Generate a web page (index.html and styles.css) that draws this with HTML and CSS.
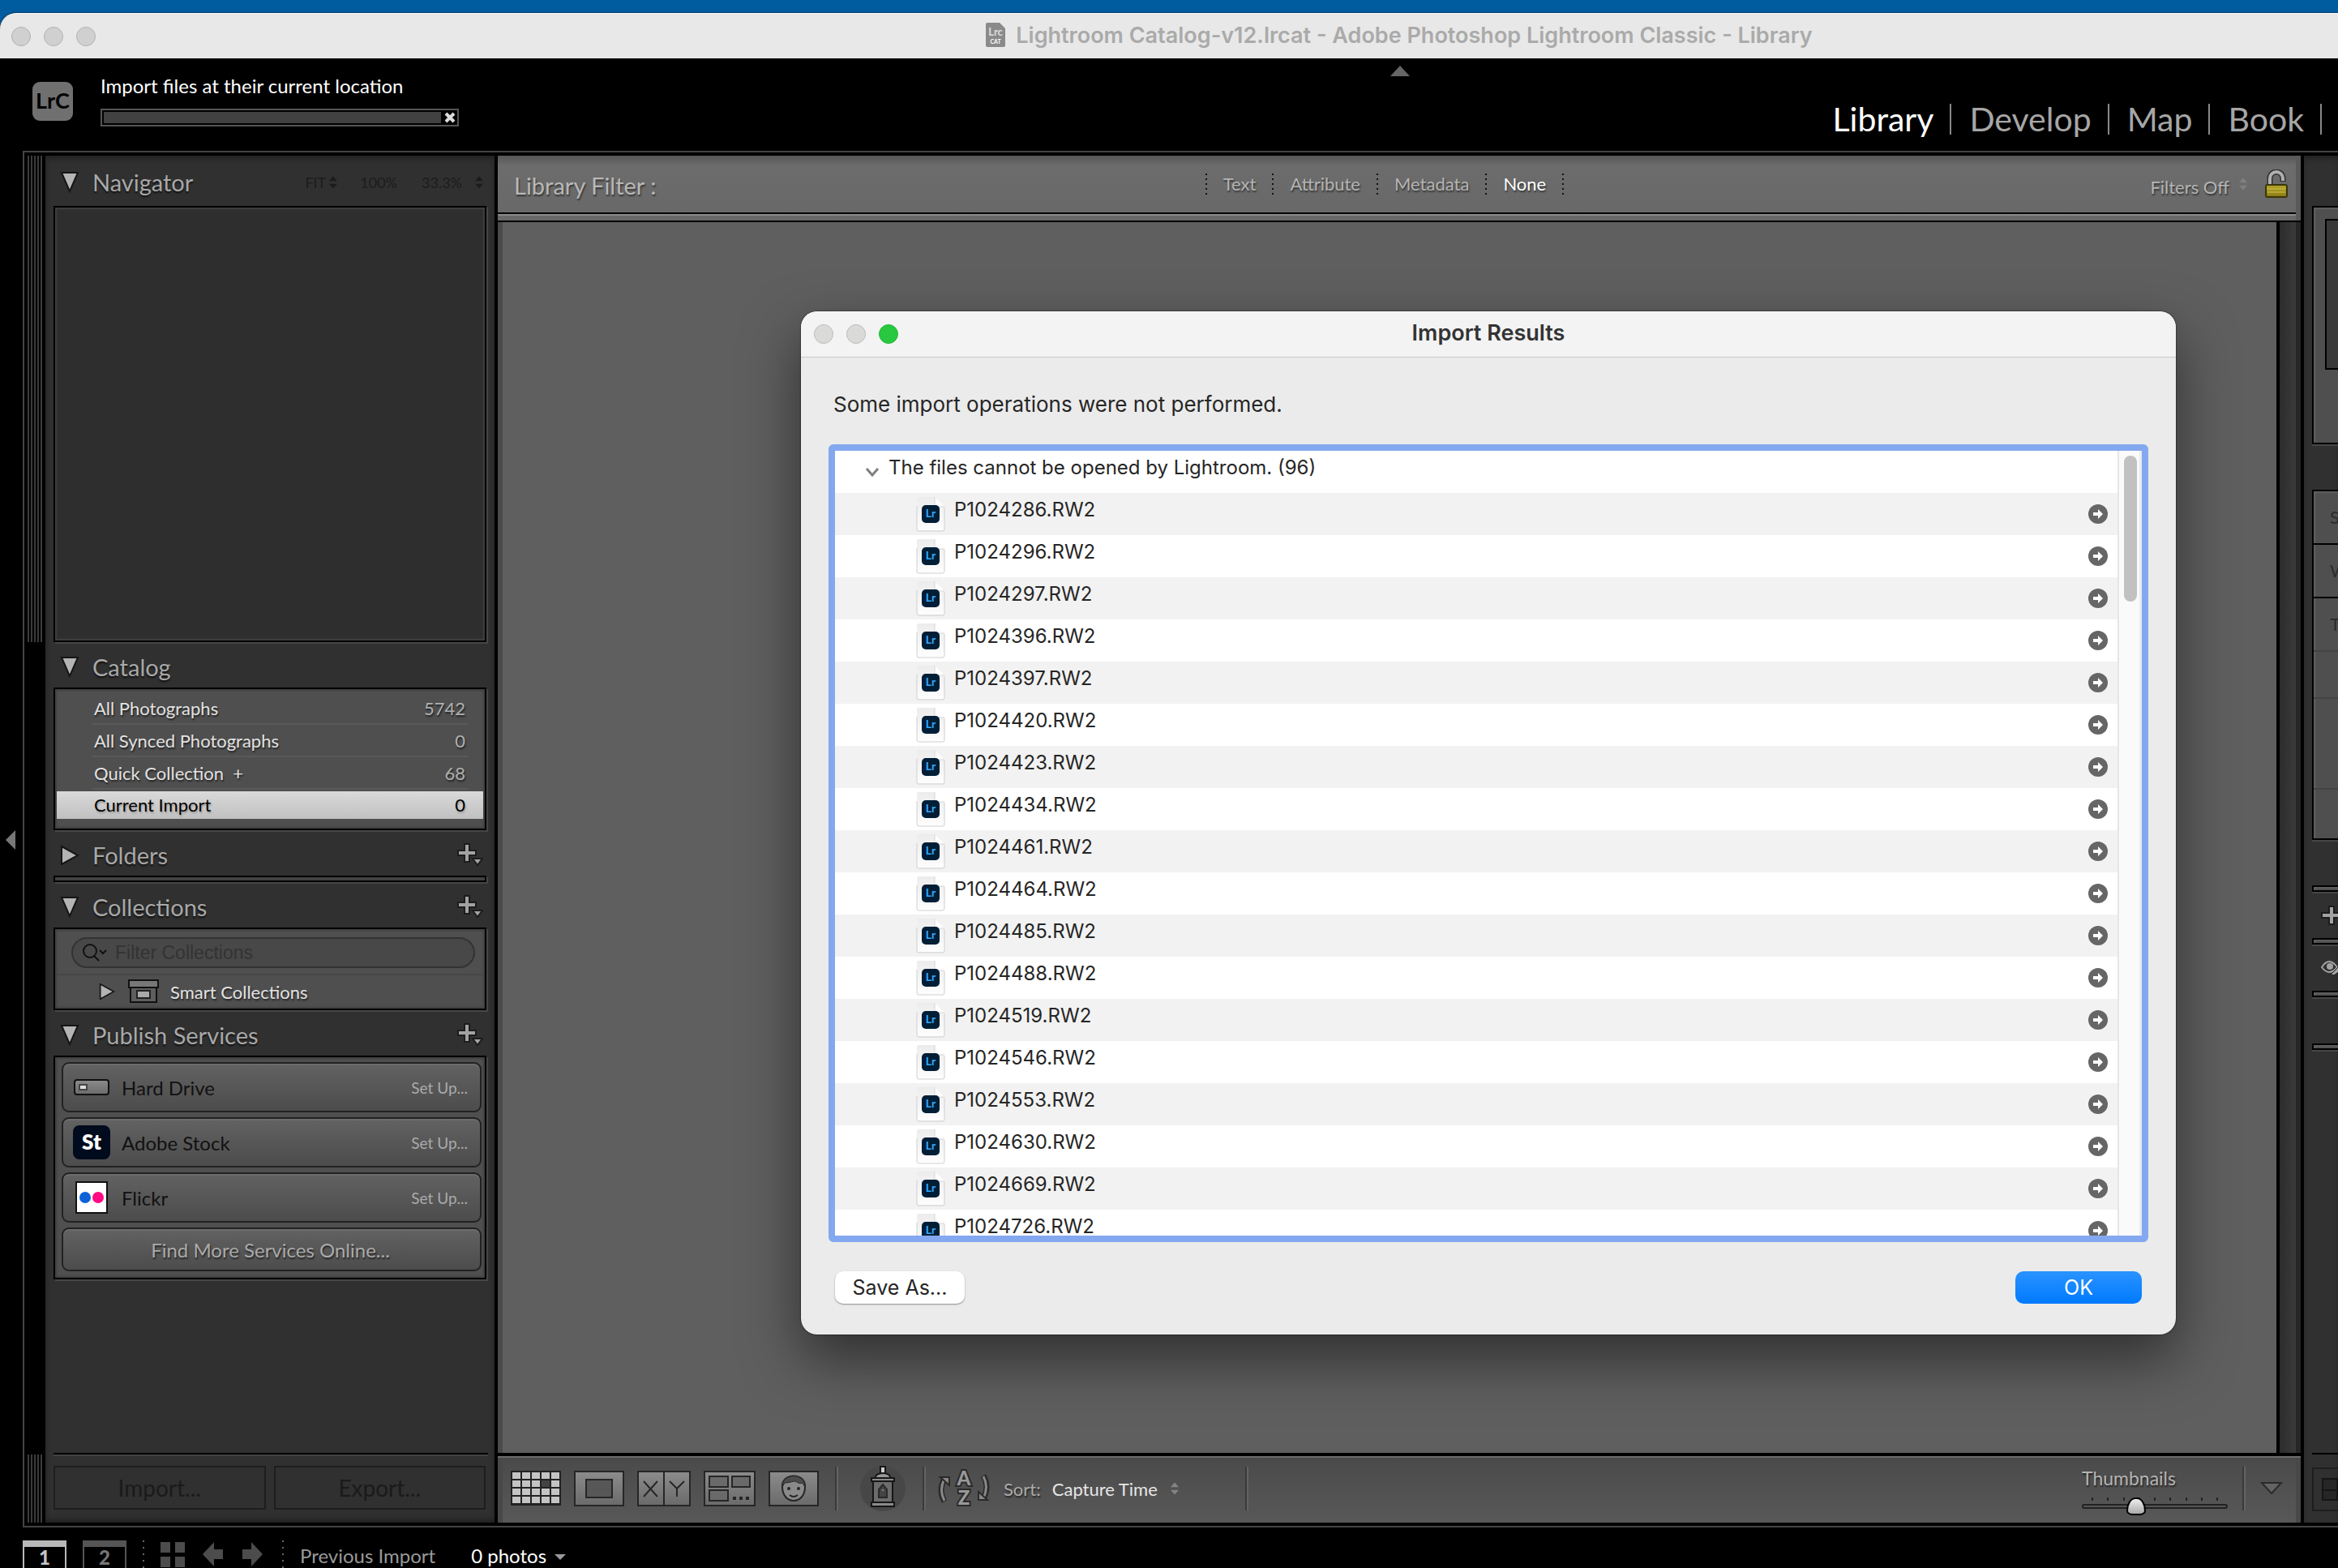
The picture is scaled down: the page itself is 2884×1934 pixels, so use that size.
FILE: index.html
```html
<!DOCTYPE HTML>
<html lang="en-US">
<head>
	<meta charset="UTF-8">
	<title>Lightroom Catalog-v12.lrcat - Adobe Photoshop Lightroom Classic - Library</title>
	<link rel="stylesheet" href="styles.css">
</head>
<body>

<!-- shared icons -->
<svg class="defs" width="0" height="0">
	<defs>
		<linearGradient id="metal" x1="0" y1="0" x2="0" y2="1">
			<stop offset="0" stop-color="#8c8c8c"/>
			<stop offset="1" stop-color="#6a6a6a"/>
		</linearGradient>
		<linearGradient id="gold" x1="0" y1="0" x2="0" y2="1">
			<stop offset="0" stop-color="#b5a62c"/>
			<stop offset="1" stop-color="#8a7a14"/>
		</linearGradient>
		<linearGradient id="page" x1="0" y1="0" x2="0" y2="1">
			<stop offset="0" stop-color="#ececec"/>
			<stop offset="1" stop-color="#fdfdfd"/>
		</linearGradient>
		<symbol id="down" viewBox="0 0 22 26"><path d="M1 1H21L11 24Z" fill="#b4b4b4" stroke="#151515" stroke-width="2"/></symbol>
		<symbol id="right" viewBox="0 0 24 24"><path d="M2 1L22 12L2 23Z" fill="#b4b4b4" stroke="#151515" stroke-width="2"/></symbol>
		<symbol id="plus" viewBox="0 0 32 30">
			<path d="M9 1h6v8h8v6h-8v8H9v-8H1V9h8z" fill="#a2a2a2" stroke="#1c1c1c" stroke-width="2"/>
			<path d="M19 19H31L25 27Z" fill="#a2a2a2" stroke="#1c1c1c" stroke-width="2"/>
		</symbol>
		<symbol id="updown" viewBox="0 0 12 18"><path d="M6 0L12 7H0ZM6 18L12 11H0Z" fill="currentColor"/></symbol>
		<symbol id="doc" viewBox="0 0 36 44">
			<path d="M1 3q0-2 2-2H23L35 13V40q0 2-2 2H3q-2 0-2-2z" fill="url(#page)"/>
			<path d="M1 12V40q0 3 2 3H33q2 0 2-3V14" fill="none" stroke="#cfcfcf" stroke-width="1"/>
			<path d="M23 1V11q0 2 2 2H35z" fill="#fff"/>
			<path d="M23 1V11q0 2 2 2H35" fill="none" stroke="#d6d6d6"/>
			<rect x="7" y="11" width="22" height="22" rx="5" fill="#001e36"/>
			<text x="18" y="26" text-anchor="middle" font-family="Lato, sans-serif" font-weight="700" font-size="14" fill="#31a8ff">Lr</text>
		</symbol>
		<symbol id="go" viewBox="0 0 24 24">
			<circle cx="12" cy="12" r="12" fill="#666"/>
			<path d="M6 10h6V6l6 6-6 6v-4H6z" fill="#fff"/>
		</symbol>
	</defs>
</svg>

<div class="app">
	<div class="titlebar">
		<div class="lights"><i></i><i></i><i></i></div>
		<h1 class="title">
			<svg width="24" height="30" viewBox="0 0 24 30">
				<path d="M2 0H17L24 7V28q0 2-2 2H2q-2 0-2-2V2q0-2 2-2z" fill="#8a8a8a"/>
				<text x="12" y="16" text-anchor="middle" font-family="Lato, sans-serif" font-size="13" font-weight="700" fill="#ddd">Lrc</text>
				<text x="12" y="26" text-anchor="middle" font-family="Lato, sans-serif" font-size="7" font-weight="700" fill="#fff">CAT</text>
			</svg>
			Lightroom Catalog-v12.lrcat - Adobe Photoshop Lightroom Classic - Library
		</h1>
	</div>

	<div class="topbar">
		<div class="hide_top"></div>
		<div class="logo">LrC</div>
		<div class="task">
			<p>Import files at their current location</p>
			<div class="progress">
				<div class="bar"></div>
				<button class="cancel" aria-label="Cancel"><svg width="14" height="14" viewBox="0 0 14 14"><path d="M2 2L12 12M12 2L2 12" stroke="#ddd" stroke-width="4"/></svg></button>
			</div>
		</div>
		<nav class="modules">
			<a href="#" class="on">Library</a>
			<a href="#">Develop</a>
			<a href="#">Map</a>
			<a href="#">Book</a>
		</nav>
	</div>

	<div class="frame">
		<div class="grips"><i class="grip_top"></i><i class="grip_bottom"></i></div>

		<div class="left">
			<div class="head head_first">
				<svg class="tri" width="22" height="26"><use href="#down"/></svg>
				<h2>Navigator</h2>
				<div class="zooms">
					<span>FIT</span><svg width="10" height="18"><use href="#updown"/></svg>
					<span class="z100">100%</span>
					<span class="z33">33.3%</span><svg width="10" height="18"><use href="#updown"/></svg>
				</div>
			</div>
			<div class="box preview"></div>

			<div class="head">
				<svg class="tri" width="22" height="26"><use href="#down"/></svg>
				<h2>Catalog</h2>
			</div>
			<ul class="box catalog">
				<li><a href="#">All Photographs</a><span>5742</span></li>
				<li><a href="#">All Synced Photographs</a><span>0</span></li>
				<li><a href="#">Quick Collection &nbsp;+</a><span>68</span></li>
				<li class="on"><a href="#">Current Import</a><span>0</span></li>
			</ul>

			<div class="head">
				<svg class="tri" width="24" height="24"><use href="#right"/></svg>
				<h2>Folders</h2>
				<button class="add" aria-label="Add folder"><svg width="32" height="30"><use href="#plus"/></svg></button>
			</div>
			<div class="box closed"></div>

			<div class="head">
				<svg class="tri" width="22" height="26"><use href="#down"/></svg>
				<h2>Collections</h2>
				<button class="add" aria-label="Add collection"><svg width="32" height="30"><use href="#plus"/></svg></button>
			</div>
			<div class="box collections">
				<label class="search">
					<svg width="32" height="24" viewBox="0 0 32 24" fill="none" stroke="#111" stroke-width="2"><circle cx="10" cy="10" r="8"/><path d="M15 16L21 22M22 9L26 13L30 9"/></svg>
					<input type="text" placeholder="Filter Collections" aria-label="Filter Collections">
				</label>
				<div class="smart">
					<svg width="20" height="20"><use href="#right"/></svg>
					<svg class="bin" width="38" height="30" viewBox="0 0 38 30" stroke="#111" stroke-width="2">
						<path d="M3 9H35V28H3z" fill="#5e5e5e"/>
						<path d="M1 1H37V10H1z" fill="#777"/>
						<path d="M11 14H27V23H11z" fill="#aaa" stroke="#222"/>
					</svg>
					<a href="#">Smart Collections</a>
				</div>
			</div>

			<div class="head">
				<svg class="tri" width="22" height="26"><use href="#down"/></svg>
				<h2>Publish Services</h2>
				<button class="add" aria-label="Add service"><svg width="32" height="30"><use href="#plus"/></svg></button>
			</div>
			<div class="box services">
				<button class="service">
					<span class="pic"><svg width="44" height="20" viewBox="0 0 44 20"><rect x="1" y="1" width="42" height="18" rx="3" fill="url(#metal)" stroke="#111" stroke-width="2"/><rect x="7" y="7" width="9" height="6" fill="#ddd" stroke="#444" stroke-width="2"/></svg></span>
					<b>Hard Drive</b><span class="setup">Set Up...</span>
				</button>
				<button class="service">
					<span class="pic"><i class="st">St</i></span>
					<b>Adobe Stock</b><span class="setup">Set Up...</span>
				</button>
				<button class="service">
					<span class="pic"><svg width="40" height="40" viewBox="0 0 40 40"><rect x="1" y="1" width="38" height="38" fill="#fff" stroke="#111" stroke-width="2"/><circle cx="12" cy="20" r="7" fill="#0f62d6"/><circle cx="28" cy="20" r="7" fill="#ff0b84"/></svg></span>
					<b>Flickr</b><span class="setup">Set Up...</span>
				</button>
				<button class="service more">Find More Services Online...</button>
			</div>

			<div class="left_foot">
				<button disabled>Import...</button>
				<button disabled>Export...</button>
			</div>
		</div>

		<div class="center">
			<div class="filter">
				<h2>Library Filter :</h2>
				<div class="kinds">
					<a href="#">Text</a><a href="#">Attribute</a><a href="#">Metadata</a><a href="#" class="on">None</a>
				</div>
				<div class="preset">
					<a href="#">Filters Off</a>
					<svg width="10" height="16"><use href="#updown"/></svg>
					<svg class="lock" width="28" height="36" viewBox="0 0 28 36">
						<path d="M6 19V11a8 8 0 0 1 16 0V15" fill="none" stroke="#333" stroke-width="7"/>
						<path d="M6 19V11a8 8 0 0 1 16 0V14" fill="none" stroke="#b0b0b0" stroke-width="4"/>
						<rect x="1" y="19" width="26" height="15" rx="2" fill="url(#gold)" stroke="#3a3508" stroke-width="2"/>
						<path d="M3 24H25M3 28H25" stroke="#d0c250"/>
					</svg>
				</div>
			</div>
			<div class="canvas"><i class="scroll"></i></div>
			<div class="tools">
				<button aria-label="Grid"><svg width="62" height="44" viewBox="0 0 62 44">
					<rect width="62" height="43" fill="#222"/>
					<path d="M2 6H60M2 16H60M2 26H60M2 36H60" stroke="#c4c4c4" stroke-width="8" stroke-dasharray="10 2"/>
					<rect x="38" y="12" width="10" height="8" fill="#444"/>
				</svg></button>
				<button aria-label="Loupe"><svg width="62" height="44" viewBox="0 0 62 44"><rect x="1" y="1" width="60" height="42" fill="url(#metal)" stroke="#262626" stroke-width="2"/><rect x="15" y="11" width="32" height="22" fill="#575757" stroke="#262626" stroke-width="2"/></svg></button>
				<button aria-label="Compare"><svg width="66" height="44" viewBox="0 0 66 44" fill="none" stroke="#262626" stroke-width="2"><rect x="1" y="1" width="64" height="42" fill="url(#metal)"/><path d="M33 1V43M8 13L25 32M25 13L8 32M40 13L49 22L58 13M49 22V32"/></svg></button>
				<button aria-label="Survey"><svg width="64" height="44" viewBox="0 0 64 44"><rect x="1" y="1" width="62" height="42" fill="url(#metal)" stroke="#262626" stroke-width="2"/><path d="M7 7H30V20H7zM35 7H57V20H35zM7 24H30V37H7z" fill="#6a6a6a" stroke="#262626" stroke-width="2"/><path d="M36 34h4M44 34h4M52 34h4" stroke="#262626" stroke-width="4"/></svg></button>
				<button aria-label="People"><svg width="62" height="44" viewBox="0 0 62 44"><rect x="1" y="1" width="60" height="42" fill="url(#metal)" stroke="#262626" stroke-width="2"/><path d="M17 20C16 2 46 2 45 20C45 30 39 37 31 37S17 30 17 20Z" fill="#8a8a8a" stroke="#262626" stroke-width="2"/><path d="M17 20C16 2 46 2 45 20L42 15C36 17 34 12 31 13S23 15 20 15Z" fill="#4c4c4c" stroke="#262626"/><circle cx="25" cy="22" r="2" fill="#262626"/><circle cx="37" cy="22" r="2" fill="#262626"/><path d="M26 30Q31 34 36 30" fill="none" stroke="#262626" stroke-width="2"/></svg></button>
				<i class="rule"></i>
				<button aria-label="Painter"><svg width="58" height="58" viewBox="0 0 58 58" stroke="#161616" stroke-width="2">
					<ellipse cx="29" cy="29" rx="28" ry="28" fill="#474747" stroke="none"/>
					<path d="M26 2h6v9h-6z" fill="#ccc"/><path d="M19 17Q20 10 29 10T39 17z" fill="#999"/>
					<rect x="17" y="20" width="24" height="26" fill="#6c6c6c"/>
					<path d="M15 16H43V20H15zM15 46H43V51H15z" fill="#8a8a8a"/>
					<path d="M24 40V30L29 24L34 30V40z" fill="#444" stroke="#2a2a2a"/><circle cx="29" cy="31" r="1" fill="#999" stroke="none"/>
				</svg></button>
				<i class="rule"></i>
				<button class="az" aria-label="Sort direction"><svg width="66" height="54" viewBox="0 -3 66 54" fill="none">
					<path d="M9 40Q1 26 9 12" stroke="#2a2a2a" stroke-width="7"/><path d="M9 39Q2 26 9 12" stroke="#888" stroke-width="3"/>
					<path d="M4 10H15V20z" fill="#888" stroke="#2a2a2a" stroke-width="2"/>
					<path d="M57 8Q65 22 57 36" stroke="#2a2a2a" stroke-width="7"/><path d="M57 9Q64 22 57 36" stroke="#888" stroke-width="3"/>
					<path d="M51 28V38H62z" fill="#888" stroke="#2a2a2a" stroke-width="2"/>
					<g class="letters"><text x="33" y="20">A</text><text x="33" y="44">Z</text></g>
				</svg></button>
				<span class="sort">Sort:</span>
				<a href="#" class="by">Capture Time</a>
				<svg class="ud" width="10" height="18"><use href="#updown"/></svg>
				<i class="rule far"></i>
				<div class="thumbs">
					<label for="size">Thumbnails</label>
					<div class="ticks"><i></i><i></i><i></i><i></i><i></i><i></i><i></i><i></i><i></i></div>
					<input type="range" id="size" min="0" max="100" value="35">
				</div>
				<i class="rule"></i>
				<button class="more_tools" aria-label="Toolbar options"><svg width="28" height="18" viewBox="0 0 28 18"><path d="M2 2H26L14 15Z" fill="#646464" stroke="#2a2a2a" stroke-width="2"/></svg></button>
			</div>
		</div>

		<div class="right">
			<div class="rbox histo"><i></i></div>
			<div class="rbox quick">
				<p>S</p><p>W</p><p>T</p><p class="s58"></p><p class="s112"></p><p class="s58"></p>
			</div>
			<div class="rbox thin"></div>
			<div class="rhead"><svg width="26" height="24" viewBox="0 0 26 24"><path d="M10 1h6v8h9v6h-9v8h-6v-8H1V9h9z" fill="#a2a2a2" stroke="#1c1c1c" stroke-width="2"/></svg></div>
			<div class="rbox thin"></div>
			<div class="rhead"><svg width="30" height="20" viewBox="0 0 30 20"><path d="M1 9Q10-5 20 9Q10 21 1 9Z" fill="none" stroke="#a2a2a2" stroke-width="2"/><circle cx="11" cy="8" r="4" fill="#a2a2a2"/><path d="M12 18L22 8L26 12L16 19z" fill="#a2a2a2" stroke="#1c1c1c"/></svg></div>
			<div class="rbox thin"></div>
			<div class="rhead"></div>
			<div class="rbox thin"></div>
			<div class="right_foot">
				<button disabled aria-label="Sync"><svg width="20" height="28" viewBox="0 0 20 28"><path d="M1 1H19V27H1zM1 15H19" fill="#262626" stroke="#151515" stroke-width="2"/></svg></button>
			</div>
		</div>

		<i class="hide_left"></i>
	</div>

	<div class="strip">
		<button class="win on">1</button>
		<button class="win">2</button>
		<i class="dots"></i>
		<svg class="four" width="30" height="32" viewBox="0 0 30 32" fill="#4c4c4c"><path d="M0 0H12V13H0zM18 0H30V13H18zM0 18H12V31H0zM18 18H30V31H18z"/></svg>
		<svg class="back" width="25" height="30" viewBox="0 0 25 30" fill="#4c4c4c"><path d="M0 15L14 0V9H25V21H14V30z"/></svg>
		<svg class="fwd" width="25" height="30" viewBox="0 0 25 30" fill="#4c4c4c"><path d="M25 15L11 0V9H0V21H11V30z"/></svg>
		<i class="dots"></i>
		<span class="source">Previous Import</span>
		<a href="#" class="count">0 photos</a>
		<i class="caret"></i>
	</div>
</div>

<!-- import results dialog -->
<div class="dialog" role="dialog" aria-labelledby="dlg_title">
	<div class="dialog_bar">
		<div class="lights"><i></i><i></i><i class="green"></i></div>
		<h2 id="dlg_title">Import Results</h2>
	</div>
	<div class="dialog_body">
		<p class="msg">Some import operations were not performed.</p>
		<div class="list">
			<ul>
				<li class="group"><svg width="18" height="12" viewBox="0 0 18 12"><path d="M2 2L9 10L16 2" fill="none" stroke="#808080" stroke-width="3"/></svg><span>The files cannot be opened by Lightroom. (96)</span></li>
				<li><svg class="doc" width="36" height="44"><use href="#doc"/></svg><span>P1024286.RW2</span><button aria-label="Show"><svg width="24" height="24"><use href="#go"/></svg></button></li>
				<li><svg class="doc" width="36" height="44"><use href="#doc"/></svg><span>P1024296.RW2</span><button aria-label="Show"><svg width="24" height="24"><use href="#go"/></svg></button></li>
				<li><svg class="doc" width="36" height="44"><use href="#doc"/></svg><span>P1024297.RW2</span><button aria-label="Show"><svg width="24" height="24"><use href="#go"/></svg></button></li>
				<li><svg class="doc" width="36" height="44"><use href="#doc"/></svg><span>P1024396.RW2</span><button aria-label="Show"><svg width="24" height="24"><use href="#go"/></svg></button></li>
				<li><svg class="doc" width="36" height="44"><use href="#doc"/></svg><span>P1024397.RW2</span><button aria-label="Show"><svg width="24" height="24"><use href="#go"/></svg></button></li>
				<li><svg class="doc" width="36" height="44"><use href="#doc"/></svg><span>P1024420.RW2</span><button aria-label="Show"><svg width="24" height="24"><use href="#go"/></svg></button></li>
				<li><svg class="doc" width="36" height="44"><use href="#doc"/></svg><span>P1024423.RW2</span><button aria-label="Show"><svg width="24" height="24"><use href="#go"/></svg></button></li>
				<li><svg class="doc" width="36" height="44"><use href="#doc"/></svg><span>P1024434.RW2</span><button aria-label="Show"><svg width="24" height="24"><use href="#go"/></svg></button></li>
				<li><svg class="doc" width="36" height="44"><use href="#doc"/></svg><span>P1024461.RW2</span><button aria-label="Show"><svg width="24" height="24"><use href="#go"/></svg></button></li>
				<li><svg class="doc" width="36" height="44"><use href="#doc"/></svg><span>P1024464.RW2</span><button aria-label="Show"><svg width="24" height="24"><use href="#go"/></svg></button></li>
				<li><svg class="doc" width="36" height="44"><use href="#doc"/></svg><span>P1024485.RW2</span><button aria-label="Show"><svg width="24" height="24"><use href="#go"/></svg></button></li>
				<li><svg class="doc" width="36" height="44"><use href="#doc"/></svg><span>P1024488.RW2</span><button aria-label="Show"><svg width="24" height="24"><use href="#go"/></svg></button></li>
				<li><svg class="doc" width="36" height="44"><use href="#doc"/></svg><span>P1024519.RW2</span><button aria-label="Show"><svg width="24" height="24"><use href="#go"/></svg></button></li>
				<li><svg class="doc" width="36" height="44"><use href="#doc"/></svg><span>P1024546.RW2</span><button aria-label="Show"><svg width="24" height="24"><use href="#go"/></svg></button></li>
				<li><svg class="doc" width="36" height="44"><use href="#doc"/></svg><span>P1024553.RW2</span><button aria-label="Show"><svg width="24" height="24"><use href="#go"/></svg></button></li>
				<li><svg class="doc" width="36" height="44"><use href="#doc"/></svg><span>P1024630.RW2</span><button aria-label="Show"><svg width="24" height="24"><use href="#go"/></svg></button></li>
				<li><svg class="doc" width="36" height="44"><use href="#doc"/></svg><span>P1024669.RW2</span><button aria-label="Show"><svg width="24" height="24"><use href="#go"/></svg></button></li>
				<li><svg class="doc" width="36" height="44"><use href="#doc"/></svg><span>P1024726.RW2</span><button aria-label="Show"><svg width="24" height="24"><use href="#go"/></svg></button></li>
			</ul>
			<div class="track"><i></i></div>
		</div>
		<div class="actions">
			<button class="save">Save As...</button>
			<button class="ok">OK</button>
		</div>
	</div>
</div>

</body>
</html>
```
FILE: styles.css
```css
*{
	padding:0;
	margin:0;
	box-sizing:border-box;
}
ul,li{
	list-style:none;
}
a{
	color:inherit;
	text-decoration:none;
}
button{
	background:none;
	border:0;
	font:inherit;
	color:inherit;
}
svg{
	display:block;
	flex:none;
}
h1,h2{
	font-weight:400;
}
body{
	height:100vh;
	overflow:hidden;
	background:#005b9f;
	font-family:Lato,"Noto Sans",sans-serif;
	font-size:22px;
	color:#aaa;
}
.defs{
	position:absolute;
}
.app{
	height:100vh;
	padding-top:16px;
	display:flex;
	flex-direction:column;
}

/**window title bar**/
.titlebar{
	height:56px;
	flex:none;
	display:flex;
	align-items:center;
	background:#e8e8e8;
	border-top:1px solid #f8f8f8;
	border-radius:20px 0 0 0;
	box-shadow:0 0 2px #000;
	font-family:Inter,sans-serif;
}
.lights{
	width:568px;
	padding-left:14px;
	display:flex;
	gap:16px;
}
.lights i{
	width:24px;
	height:24px;
	border-radius:50%;
	background:#d0d0d0;
	border:1px solid #b2b2b2;
}
.title{
	flex:1;
	display:flex;
	justify-content:center;
	align-items:center;
	gap:13px;
	padding-bottom:3px;
	font-size:27px;
	font-weight:600;
	color:#aaa;
}

/**black bar with logo and modules**/
.topbar{
	height:114px;
	flex:none;
	display:flex;
	align-items:flex-start;
	background:#000;
	padding:18px 20px 0 40px;
	position:relative;
}
.hide_top{
	position:absolute;
	left:1715px;
	top:9px;
	border:12px solid transparent;
	border-top:0;
	border-bottom:13px solid #666;
}
.logo{
	margin-top:11px;
	width:50px;
	height:48px;
	border-radius:9px;
	background:#707070;
	color:#000;
	font-size:27px;
	font-weight:700;
	line-height:46px;
	text-align:center;
}
.task{
	width:442px;
	margin-left:34px;
	color:#fff;
	font-size:24px;
	line-height:32px;
}
.progress{
	margin-top:12px;
	height:22px;
	display:flex;
	align-items:center;
	border:2px solid #555;
	padding:2px;
}
.progress .bar{
	flex:1;
	height:14px;
	background:#414141;
}
.cancel{
	margin-left:4px;
}
.modules{
	margin-left:auto;
	margin-top:38px;
	display:flex;
	font-size:41px;
	line-height:38px;
	color:#a6a6a6;
}
.modules a{
	padding:0 20px 0 22px;
	border-right:2px solid #888;
}
.modules .on{
	color:#fff;
}

/**main frame**/
.frame{
	flex:1;
	min-height:0;
	display:flex;
	background:#000;
	border:2px solid #444;
	border-right:0;
	padding:4px 0 4px 4px;
	margin-left:28px;
	box-shadow:-28px 0 0 #000;
	position:relative;
}
.hide_left{
	position:absolute;
	left:-23px;
	top:836px;
	border:12px solid transparent;
	border-left:0;
	border-right-color:#777;
}
.grips{
	width:18px;
	margin-right:4px;
	display:flex;
	flex-direction:column;
	justify-content:space-between;
}
.grips i{
	background:repeating-linear-gradient(90deg,#3c3c3c 0,#3c3c3c 2px,#000 2px,#000 4px);
}
.grip_top{
	height:600px;
}
.grip_bottom{
	height:84px;
}

/**left panel**/
.left{
	width:554px;
	padding:0 8px 0 10px;
	background:#303030;
	box-shadow:inset 0 6px 8px -4px #1c1c1c, inset 0 -6px 8px -4px #1c1c1c;
	display:flex;
	flex-direction:column;
}
.head{
	height:54px;
	flex:none;
	display:flex;
	align-items:center;
	padding:3px 6px 0 8px;
}
.head_first{
	height:62px;
}
.tri{
	width:24px;
}
.head h2{
	margin-left:16px;
	font-size:29px;
	line-height:36px;
	color:#a8a8a8;
	text-shadow:0 2px 2px #111;
}
.add{
	margin-left:auto;
}
.zooms{
	margin-left:auto;
	display:flex;
	align-items:center;
	font-size:18px;
	color:#1c1c1c;
}
.zooms svg{
	margin-left:4px;
}
.z100{
	margin-left:28px;
}
.z33{
	margin:0 12px 0 30px;
}
.box{
	flex:none;
	border:2px solid #000;
	margin:0 2px 2px 0;
	background:#4f4f4f;
	box-shadow:2px 2px 0 #464646, inset 2px 2px 2px #404040, inset -2px -2px 2px #404040;
}
.preview{
	height:538px;
	background:#2e2e2e;
}
.closed{
	height:8px;
}
.catalog{
	height:176px;
	padding:4px 2px 0;
}
.catalog li{
	height:40px;
	padding:0 22px 0 46px;
	display:flex;
	justify-content:space-between;
	align-items:center;
	line-height:36px;
	color:#e2e2e2;
	text-shadow:1px 2px 2px #222;
	background:linear-gradient(#595959,#595959) 44px 100%/464px 2px no-repeat;
}
.catalog li span{
	color:#b0b0b0;
}
.catalog .on,.catalog .on span{
	color:#000;
	text-shadow:1px 2px 2px #999;
}
.catalog .on{
	height:34px;
	margin-top:2px;
	background:linear-gradient(#dadada,#c0c0c0);
}
.collections{
	height:102px;
	padding:10px 2px 0;
}
.search{
	height:38px;
	margin:0 10px 0 18px;
	padding-left:11px;
	display:flex;
	align-items:center;
	border:2px solid #333;
	border-radius:19px;
	background:#484848;
}
.search input{
	flex:1;
	margin-left:9px;
	border:0;
	background:none;
	outline:0;
	font:23px "Liberation Sans",sans-serif;
}
.search input::placeholder{
	color:#333;
	opacity:1;
}
.smart{
	margin-top:7px;
	height:42px;
	border-top:2px solid #464646;
	padding-left:52px;
	display:flex;
	align-items:center;
	color:#e2e2e2;
	text-shadow:1px 2px 2px #222;
}
.bin{
	margin:0 14px 0 16px;
}
.services{
	height:276px;
	padding:6px 4px 0 8px;
	display:flex;
	flex-direction:column;
	gap:6px;
}
.service{
	height:62px;
	padding:0 15px 0 12px;
	display:flex;
	align-items:center;
	border:2px solid #222;
	border-radius:9px;
	background:linear-gradient(#626262,#4c4c4c);
	box-shadow:inset 0 2px 0 #6c6c6c;
}
.service b{
	font-size:24px;
	font-weight:400;
	color:#111;
}
.pic{
	width:46px;
	margin-right:14px;
	display:flex;
	justify-content:center;
}
.st{
	width:46px;
	height:42px;
	border-radius:8px;
	background:#000b1d;
	color:#fff;
	font:800 26px/40px Lato,sans-serif;
}
.setup{
	margin-left:auto;
	font-size:19px;
	color:#aaa;
}
.more{
	height:54px;
	justify-content:center;
	font-size:24px;
	text-shadow:1px 2px 2px #222;
}
.left_foot{
	margin-top:auto;
	height:86px;
	flex:none;
	padding:14px 3px 0 0;
	display:flex;
	gap:10px;
	border-top:2px solid #000;
	box-shadow:inset 0 2px 0 #444;
}
.left_foot button{
	flex:1;
	height:54px;
	border:2px solid #1e1e1e;
	font-size:28px;
	color:#1a1a1a;
}

/**center**/
.center{
	flex:1;
	margin:0 4px;
	display:flex;
	flex-direction:column;
	background:#5f5f5f;
	box-shadow:inset 6px 0 0 #4a4a4a;
}
.filter{
	height:82px;
	flex:none;
	padding:0 16px 10px 20px;
	display:flex;
	align-items:center;
	background:linear-gradient(#000,#000) 0 70px/100% 2px no-repeat,
		linear-gradient(#8a8a8a,#8a8a8a) 0 72px/100% 2px no-repeat,
		linear-gradient(#565656,#6c6c6c 12px,#686868);
	border-bottom:2px solid #000;
	box-shadow:inset -6px 0 0 #5a5a5a;
}
.filter h2{
	flex:1;
	padding-top:3px;
	font-size:29px;
	color:#b8b8b8;
	text-shadow:1px 2px 2px #333;
}
.kinds{
	display:flex;
	margin-right:40px;
	line-height:26px;
	color:#b4b4b4;
	text-shadow:1px 2px 2px #333;
}
/*dotted separators, 2px dots*/
.kinds a{
	padding:0 20px 0 22px;
	background:repeating-linear-gradient(#111 0,#111 2px,transparent 2px,transparent 6px) 0 0/2px 100% no-repeat;
}
.kinds:after{
	content:"";
	width:2px;
	background:repeating-linear-gradient(#111 0,#111 2px,transparent 2px,transparent 6px);
}
.kinds .on{
	color:#fff;
}
.preset{
	flex:1;
	display:flex;
	align-items:center;
	justify-content:flex-end;
	color:#b4b4b4;
	text-shadow:1px 2px 2px #333;
}
.preset a{
	padding-top:6px;
	margin-right:12px;
}
.preset svg{
	color:#808080;
}
.preset .lock{
	margin-left:22px;
}
.canvas{
	flex:1;
	display:flex;
	justify-content:flex-end;
}
.scroll{
	width:30px;
	border-left:4px solid #000;
	background:linear-gradient(90deg,#2c2c2c,#3a3a3a 20px,#262626 20px);
}
.tools{
	height:86px;
	flex:none;
	padding:2px 22px 4px 16px;
	display:flex;
	align-items:center;
	border-top:4px solid #000;
	background:linear-gradient(#4a4a4a,#585858);
	box-shadow:inset 0 2px 0 #6c6c6c, inset -6px 0 0 #484848, inset 6px 0 0 #484848;
}
.tools button{
	margin-right:16px;
}
.rule{
	width:4px;
	height:54px;
	background:#3a3a3a;
	border-right:2px solid #636363;
}
.tools .rule{
	margin:0 12px 0 4px;
}
.tools .rule + button{
	margin-left:14px;
}
.tools .rule + .az{
	margin-left:2px;
}
.letters{
	font:900 24px Lato,sans-serif;
	text-anchor:middle;
	fill:#989898;
	stroke:#2a2a2a;
	stroke-width:4px;
	paint-order:stroke;
}
.sort{
	color:#aaa;
	text-shadow:1px 2px 2px #222;
	margin-right:14px;
}
.by{
	color:#e6e6e6;
	margin-right:16px;
}
.ud{
	color:#848484;
}
.tools .far{
	margin:0 auto 0 82px;
}
.thumbs{
	width:180px;
	margin-right:18px;
	padding-top:4px;
	line-height:24px;
	font-size:23px;
	color:#b4b4b4;
	text-shadow:1px 2px 2px #222;
}
.ticks{
	margin-top:12px;
	height:4px;
	padding:0 12px;
	display:flex;
	justify-content:space-between;
}
.ticks i{
	width:2px;
	background:#222;
}
.thumbs input{
	appearance:none;
	display:block;
	width:100%;
	height:14px;
	background:none;
}
.thumbs input::-webkit-slider-runnable-track{
	height:6px;
	border:2px solid #222;
	border-radius:3px;
}
.thumbs input::-webkit-slider-thumb{
	appearance:none;
	width:24px;
	height:22px;
	margin-top:-10px;
	background:linear-gradient(#eee,#aaa);
	border:2px solid #000;
	border-radius:50% 50% 8px 8px / 80% 80% 6px 6px;
}
.thumbs + .rule{
	margin:0 10px 0 0;
}
.tools .rule + .more_tools{
	margin:0 0 0 8px;
}

/**right panel, runs off the window**/
.right{
	width:42px;
	padding-left:10px;
	padding-top:62px;
	background:#303030;
	box-shadow:inset 0 6px 8px -4px #1c1c1c;
	display:flex;
	flex-direction:column;
	overflow:hidden;
}
.rbox{
	flex:none;
	border:2px solid #000;
	border-right:0;
	background:#4f4f4f;
	box-shadow:inset 2px 2px 2px #606060, 0 2px 0 #464646;
}
.histo{
	height:294px;
	padding:14px 0 0 14px;
	margin-bottom:56px;
}
.histo i{
	display:block;
	height:186px;
	border:2px solid #000;
	border-right:0;
	background:#393939;
}
.quick{
	height:432px;
	margin-bottom:56px;
}
.quick p{
	height:66px;
	padding-left:20px;
	line-height:64px;
	color:#2c2c2c;
	border-bottom:2px solid #000;
}
.quick p + p + p{
	border-color:#444;
}
.quick .s58{
	height:58px;
}
.quick .s112{
	height:112px;
}
.quick .s58:last-child{
	border:0;
}
.thin{
	height:8px;
}
.rhead{
	height:57px;
	flex:none;
	padding-left:11px;
	display:flex;
	align-items:center;
}
.right_foot{
	margin-top:auto;
	height:86px;
	padding-top:16px;
	border-top:2px solid #000;
}
.right_foot button{
	width:60px;
	height:54px;
	padding-left:10px;
	border:2px solid #1e1e1e;
}

/**bottom strip**/
.strip{
	height:50px;
	flex:none;
	padding:16px 0 0 28px;
	display:flex;
	align-items:flex-start;
	background:#000;
	font-size:24px;
	line-height:38px;
	overflow:hidden;
}
.win{
	width:54px;
	height:36px;
	margin-right:20px;
	border:2px solid #555;
	border-top-width:8px;
	color:#777;
	font-weight:900;
	line-height:26px;
}
.win.on{
	border-color:#b8b8b8;
	color:#c4c4c4;
}
.dots{
	width:2px;
	height:36px;
	background:repeating-linear-gradient(#666 0,#666 2px,transparent 2px,transparent 8px);
}
.four{
	margin:2px 22px 0 20px;
}
.back{
	margin:2px 24px 0 0;
}
.fwd{
	margin:2px 24px 0 0;
}
.source{
	margin:0 44px 0 20px;
	color:#999;
}
.count{
	color:#fff;
}
.caret{
	margin:17px 0 0 10px;
	border:7px solid transparent;
	border-bottom:0;
	border-top-color:#999;
}

/**dialog over the window**/
.dialog{
	position:absolute;
	left:988px;
	right:200px;
	top:384px;
	border-radius:20px;
	background:#ebebeb;
	box-shadow:0 0 2px #000, 0 30px 70px rgba(0,0,0,.5);
	font-family:Inter,sans-serif;
	color:#262626;
}
.dialog_bar{
	height:57px;
	display:flex;
	align-items:center;
	background:#f3f3f3;
	border-bottom:1px solid #c8c8c8;
	border-radius:20px 20px 0 0;
}
.dialog_bar .lights{
	flex:1;
	padding-left:16px;
}
.dialog_bar .lights i{
	background:#dadad9;
	border-color:#bcbcbc;
}
.dialog_bar .lights .green{
	background:#28c840;
	border-color:#24b83a;
}
.dialog_bar h2{
	padding-bottom:3px;
	font-size:27px;
	font-weight:600;
	color:#333;
}
.dialog_bar:after{
	content:"";
	flex:1;
	padding-left:16px;
}
.dialog_body{
	padding:42px 34px 38px;
}
.msg{
	padding-left:6px;
	font-size:26px;
	line-height:32px;
}
.list{
	margin-top:33px;
	height:984px;
	display:flex;
	border:8px solid #83a8ef;
	border-radius:6px;
	background:#fff;
	overflow:hidden;
}
.list ul{
	flex:1;
	height:968px;
	overflow:hidden;
}
.list li{
	height:52px;
	padding:0 12px 0 100px;
	display:flex;
	align-items:center;
	font-size:24px;
}
.list li:nth-child(even){
	background:#f2f2f2;
}
.list li span{
	margin-left:11px;
	padding-bottom:12px;
}
.list li button{
	margin-left:auto;
}
.list .group{
	padding-left:37px;
}
.track{
	width:30px;
	border-left:2px solid #e6e6e6;
	border-right:3px solid #e9ebf0;
	background:#fafafa;
	padding:6px 0 0 6px;
}
.track i{
	display:block;
	width:16px;
	height:180px;
	border-radius:8px;
	background:#c1c1c1;
}
.actions{
	margin-top:36px;
	padding:0 8px;
	display:flex;
	justify-content:space-between;
	font-size:25px;
	line-height:38px;
}
.actions button{
	height:40px;
	border-radius:10px;
}
.save{
	width:160px;
	background:#fff;
	box-shadow:0 1px 2px rgba(0,0,0,.4);
}
.ok{
	width:156px;
	background:linear-gradient(#2a93ff,#007aff);
	color:#fff;
}
```
